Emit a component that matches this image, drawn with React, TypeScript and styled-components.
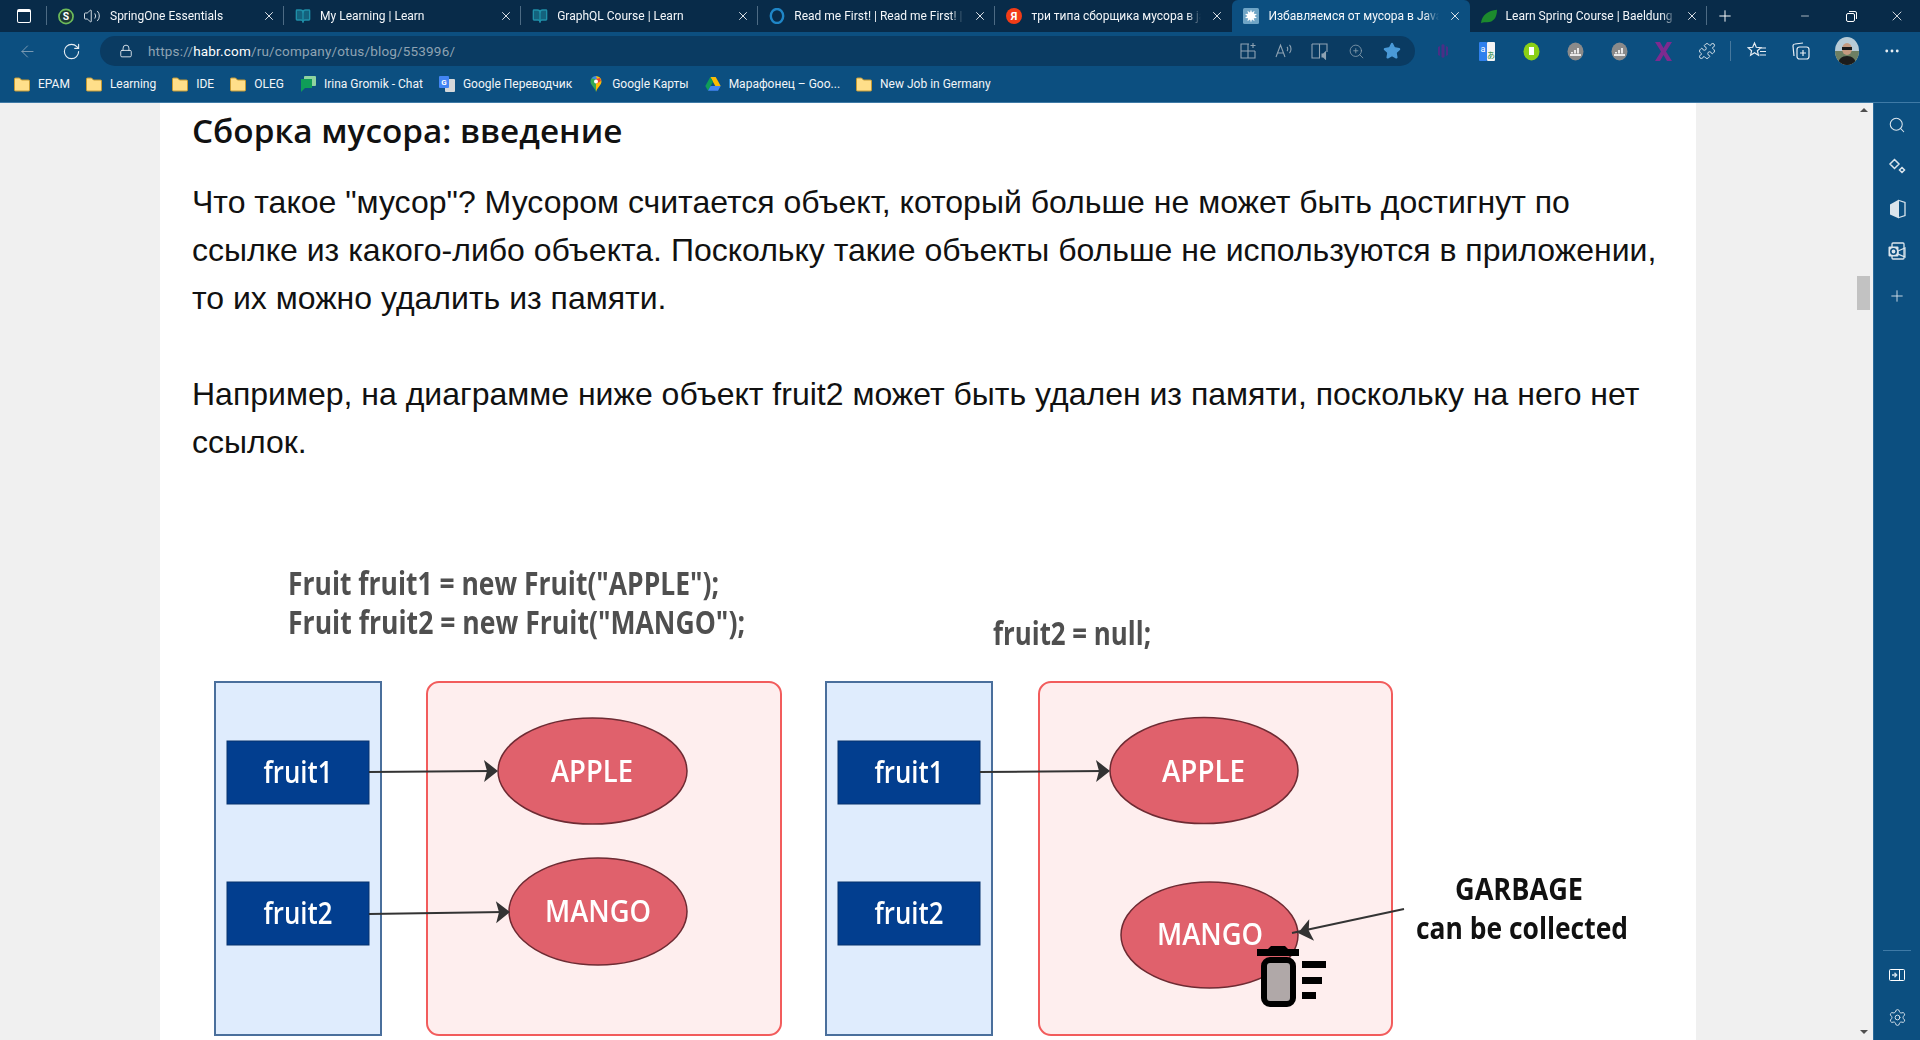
import styled, { createGlobalStyle } from "styled-components";
import { ReactNode } from "react";
import {
  ArrowLeft,
  RotateCw,
  Lock,
  Volume2,
  BookOpen,
  X,
  Plus,
  Minus,
  Search,
  ZoomIn,
  Star,
  Puzzle,
  Settings,
  Ellipsis,
} from "lucide-react";

const GlobalStyle = createGlobalStyle`
  html, body {
    margin: 0;
    padding: 0;
    height: 100%;
    overflow: hidden;
    background: #f0f0f0;
  }
  * {
    box-sizing: border-box;
  }
`;

const Window = styled.div`
  display: flex;
  flex-direction: column;
  width: 1920px;
  height: 1040px;
  overflow: hidden;
  font-family: Roboto, "Noto Sans", sans-serif;
`;

/* ---------- tab strip ---------- */

const TabStrip = styled.div`
  display: flex;
  align-items: stretch;
  height: 32px;
  background: #082b49;
  color: #fff;
`;

const WindowButton = styled.div`
  display: flex;
  align-items: center;
  justify-content: center;
  width: 47px;
  position: relative;
`;

const Separator = styled.span`
  position: absolute;
  right: 0;
  top: 6px;
  bottom: 7px;
  width: 1px;
  background: #4d6b84;
`;

const WindowGlyph = styled.span`
  width: 14px;
  height: 14px;
  border: 1.5px solid #fff;
  border-top-width: 3px;
  border-radius: 2px;
`;

const Tab = styled.div<{ $active?: boolean }>`
  position: relative;
  display: flex;
  align-items: center;
  width: 237.1px;
  padding: 0 8px 0 11px;
  gap: 9px;
  font-size: 12px;
  background: ${(p) => (p.$active ? "#0c4f80" : "transparent")};
  border-radius: ${(p) => (p.$active ? "6px 6px 0 0" : "0")};
`;

const TabFavicon = styled.span`
  display: flex;
  align-items: center;
  justify-content: center;
  width: 16px;
  height: 16px;
  flex: none;
`;

const TabTitle = styled.span`
  flex: 1;
  overflow: hidden;
  white-space: nowrap;
  color: #f4f7fa;
  mask-image: linear-gradient(to right, #000 calc(100% - 14px), transparent);
`;

const TabClose = styled.span`
  display: flex;
  flex: none;
  color: #e9eef2;
`;

const NewTab = styled.div`
  display: flex;
  align-items: center;
  justify-content: center;
  width: 36px;
`;

const WindowControls = styled.div`
  display: flex;
  align-items: center;
  margin-left: auto;
`;

const WindowControl = styled.span`
  display: flex;
  align-items: center;
  justify-content: center;
  width: 46px;
  height: 32px;
`;

/* ---------- toolbar ---------- */

const Toolbar = styled.div`
  display: flex;
  align-items: center;
  height: 38px;
  padding: 4px 6px 4px 5px;
  background: #0c4f80;
  color: #e8eef3;
`;

const ToolSlot = styled.span<{ $size?: number }>`
  display: flex;
  align-items: center;
  justify-content: center;
  flex: none;
  width: ${(p) => p.$size ?? 44}px;
  height: 30px;
`;

const AddressBar = styled.div`
  display: flex;
  align-items: center;
  flex: 1;
  height: 30px;
  margin-left: 7px;
  margin-right: 6px;
  padding: 0 5px 0 9px;
  background: #0a3b62;
  border-radius: 15px;
`;

const Url = styled.div`
  flex: 1;
  margin-left: 5px;
  font-size: 13.5px;
  letter-spacing: 0.18px;
  color: #8fa3b3;
  b {
    font-weight: 400;
    color: #fff;
  }
`;

const ToolDivider = styled.span`
  width: 1px;
  height: 20px;
  margin: 0 3px 0 1px;
  background: #47789d;
`;

/* ---------- bookmarks ---------- */

const BookmarkBar = styled.div`
  display: flex;
  align-items: center;
  gap: 16px;
  height: 32px;
  padding: 0 0 4px 14px;
  background: #0c4f80;
  font-size: 12px;
  color: #f2f5f8;
`;

const Bookmark = styled.div`
  display: flex;
  align-items: center;
  gap: 8px;
  white-space: nowrap;
`;

const BookmarkIcon = styled.span`
  display: flex;
  flex: none;
  width: 16px;
  height: 16px;
`;

/* ---------- page ---------- */

const Main = styled.div`
  flex: 1;
  display: flex;
  min-height: 0;
  border-top: 1px solid #3f7aa6;
`;

const PageArea = styled.div`
  flex: 1;
  display: flex;
  justify-content: center;
  background: #f0f0f0;
  overflow: hidden;
`;

const Article = styled.article`
  width: 1536px;
  background: #fff;
  padding-top: 5px;
  color: #111;
`;

const Heading = styled.h2`
  margin: 0 0 26px;
  padding-left: 32px;
  font-family: "Open Sans", "Noto Sans", sans-serif;
  font-size: 33.3px;
  line-height: 44px;
  font-weight: 600;
  color: #111;
`;

const Paragraph = styled.p`
  margin: 0;
  padding: 0 32px;
  font-family: "Liberation Sans", Arial, sans-serif;
  font-size: 32px;
  line-height: 48px;
  color: #111;
`;

const Diagram = styled.svg`
  display: block;
  margin-top: 54px;
  filter: blur(0.5px);
`;

const CodeText = styled.text`
  font-family: "Open Sans", sans-serif;
  font-weight: 700;
  font-size: 32px;
  fill: #4f4f4f;
`;

const NodeText = styled.text`
  font-family: "Open Sans", sans-serif;
  font-weight: 600;
  font-size: 31px;
  fill: #fff;
`;

const NoteText = styled.text`
  font-family: "Open Sans", sans-serif;
  font-weight: 700;
  font-size: 30px;
  fill: #111;
`;

/* ---------- scrollbar and sidebar ---------- */

const Scrollbar = styled.div`
  position: relative;
  width: 17px;
  background: #f0f0f0;
`;

const ScrollArrow = styled.span<{ $down?: boolean }>`
  position: absolute;
  left: 4px;
  ${(p) => (p.$down ? "bottom: 6px;" : "top: 5px;")}
  border-left: 4px solid transparent;
  border-right: 4px solid transparent;
  ${(p) => (p.$down ? "border-top: 4px solid #505050;" : "border-bottom: 4px solid #505050;")}
`;

const ScrollThumb = styled.span`
  position: absolute;
  left: 1px;
  top: 173px;
  width: 13px;
  height: 34px;
  background: #c2c2c2;
`;

const Sidebar = styled.aside`
  display: flex;
  flex-direction: column;
  align-items: center;
  width: 47px;
  padding: 1px 0 2px;
  background: #0c4f80;
  border-left: 1px solid #2b6a99;
  color: #dbe5ec;
`;

const SideSlot = styled.span<{ $shift?: number }>`
  display: flex;
  align-items: center;
  justify-content: center;
  width: 100%;
  height: 42px;
  flex: none;
  margin-top: ${(p) => p.$shift ?? 0}px;
`;

const SideSpacer = styled.div`
  flex: 1;
`;

const SideDivider = styled.span`
  width: 28px;
  height: 1px;
  margin-bottom: 3px;
  background: #3f7aa6;
`;

/* ---------- icons ---------- */

const SpringIcon = () => (
  <svg width="17" height="17" viewBox="0 0 17 17">
    <circle cx="8.5" cy="8.5" r="7.5" fill="#1c3a33" stroke="#6dbb5a" strokeWidth="1.8" />
    <text x="8.5" y="12.5" textAnchor="middle" fontSize="11" fontWeight="700" fill="#fff" fontFamily="Roboto">
      S
    </text>
  </svg>
);

const RingIcon = () => (
  <svg width="16" height="16" viewBox="0 0 16 16">
    <ellipse cx="8" cy="8" rx="6.2" ry="7" fill="none" stroke="#1f86c7" strokeWidth="2.4" />
  </svg>
);

const YandexIcon = () => (
  <svg width="16" height="16" viewBox="0 0 16 16">
    <circle cx="8" cy="8" r="8" fill="#f23c17" />
    <text x="8" y="12" textAnchor="middle" fontSize="11" fontWeight="700" fill="#fff" fontFamily="Roboto">
      Я
    </text>
  </svg>
);

const HabrIcon = () => (
  <svg width="16" height="16" viewBox="0 0 16 16">
    <rect width="16" height="16" rx="1.5" fill="#6fa5c6" />
    <path
      d="M8 1.5l1 3 2.6-1.7-.8 3 3.2.2-2.300 2 2.300 2-3.200.2.800 3L9 11.500l-1 3-1-3-2.600 1.700.8-3-3.200-.2 2.300-2-2.300-2 3.200-.2-.8-3L7 4.500z"
      fill="#fff"
    />
  </svg>
);

const LeafIcon = () => (
  <svg width="18" height="15" viewBox="0 0 18 15">
    <path d="M0 15C1 6 8 1 18 0c0 9-4 14-11 14-2 0-4 0-7 1z" fill="#1c8a2d" />
  </svg>
);

const FolderIcon = () => (
  <svg width="16" height="16" viewBox="0 0 16 16">
    <path d="M.5 3a1 1 0 011-1h4l2 2h7a1 1 0 011 1v9a1 1 0 01-1 1h-13a1 1 0 01-1-1z" fill="#ffdf8a" stroke="#c69a32" />
  </svg>
);

const ChatIcon = () => (
  <svg width="16" height="16" viewBox="0 0 16 16">
    <rect x="4" y="0" width="12" height="10" rx="1" fill="#8fd3a0" />
    <path d="M1 3h11v9H5l-4 4z" fill="#0f9d58" />
  </svg>
);

const TranslateIcon = () => (
  <svg width="16" height="16" viewBox="0 0 16 16">
    <rect x="6" y="3" width="10" height="13" rx="1" fill="#d5d8da" />
    <rect x="0" y="0" width="10" height="12" rx="1" fill="#4285f4" />
    <text x="5" y="9" textAnchor="middle" fontSize="8" fontWeight="700" fill="#fff" fontFamily="Roboto">
      G
    </text>
  </svg>
);

const MapsIcon = () => (
  <svg width="16" height="16" viewBox="0 0 16 16">
    <path d="M8 0a5.5 5.5 0 015.5 5.5C13.5 9 9.5 11 8 16z" fill="#fbbc04" />
    <path d="M8 0a5.5 5.5 0 00-5.5 5.5C2.5 9 6.5 11 8 16z" fill="#34a853" />
    <path d="M3.5 2.5A5.5 5.5 0 018 0l1 3z" fill="#4285f4" />
    <path d="M12 2L8 3v5l5-3z" fill="#ea4335" />
    <circle cx="8" cy="5.5" r="2" fill="#fff" />
  </svg>
);

const DriveIcon = () => (
  <svg width="16" height="16" viewBox="0 0 16 16">
    <path d="M5.3 1h5.4l5 9h-5.4z" fill="#fbbc04" />
    <path d="M5.3 1L.3 10l2.700 4.700L8 5.800z" fill="#0f9d58" />
    <path d="M3 14.700h10l2.700-4.700H5.600z" fill="#4285f4" />
  </svg>
);

const CircleBadge = ({ color, children }: { color: string; children?: ReactNode }) => (
  <svg width="17" height="19" viewBox="0 0 17 19">
    <ellipse cx="8.5" cy="9.5" rx="8" ry="9" fill={color} />
    {children}
  </svg>
);

const BarsGlyph = () => (
  <path
    d="M3 12h11v2H3zM4 10h2v1.500H4zM7 8h2v3.500H7zM10 6h2v5.500h-2z"
    fill="#e8e8e8"
  />
);

const TranslatorIcon = () => (
  <svg width="16" height="19" viewBox="0 0 16 19">
    <rect width="8" height="19" rx="1" fill="#2f80ed" />
    <rect x="8" width="8" height="19" rx="1" fill="#f4f4f4" />
    <text x="4" y="10" textAnchor="middle" fontSize="9" fill="#fff" fontFamily="Roboto">
      a
    </text>
    <text x="12" y="16" textAnchor="middle" fontSize="8" fill="#2a8a3e" fontFamily="Noto Sans CJK JP">
      あ
    </text>
  </svg>
);

const PurpleMark = () => (
  <svg width="12" height="14" viewBox="0 0 12 14">
    <path d="M1 3l2-1v10l-2-1zM4.500 1l1.500-1 1.500 1v12l-1.500 1-1.500-1zM9 2l2 1v8l-2 1z" fill="#4a2f86" />
  </svg>
);

const CrossMark = () => (
  <svg width="17" height="19" viewBox="0 0 17 19">
    <path d="M0 0h5l3.500 6L12 0h5L11 9.500 17 19h-5l-3.500-6L5 19H0l6-9.500z" fill="#7d2a8f" />
  </svg>
);

const AvatarIcon = () => (
  <svg width="24" height="28" viewBox="0 0 24 28">
    <defs>
      <clipPath id="avatar-clip">
        <ellipse cx="12" cy="14" rx="12" ry="14" />
      </clipPath>
    </defs>
    <g clipPath="url(#avatar-clip)">
      <rect width="24" height="28" fill="#b7cbd6" />
      <rect y="14" width="24" height="14" fill="#6d7f63" />
      <ellipse cx="12" cy="12" rx="5" ry="6" fill="#c59a80" />
      <rect x="7" y="10" width="10" height="3" fill="#1a1a1a" />
      <path d="M3 28c0-6 4-9 9-9s9 3 9 9z" fill="#1c1c1c" />
    </g>
  </svg>
);

const FavoritesIcon = () => (
  <svg width="20" height="20" viewBox="0 0 20 20" fill="none" stroke="#e8eef3" strokeWidth="1.2">
    <path d="M7.5 2l1.800 4.300 4.600.4-3.500 3 1 4.500-3.900-2.400-3.900 2.400 1-4.500-3.500-3 4.600-.4z" />
    <path d="M14 7h5M13 10.500h6M12.500 14h6.500" />
  </svg>
);

const CollectionsIcon = () => (
  <svg width="20" height="20" viewBox="0 0 20 20" fill="none" stroke="#e8eef3" strokeWidth="1.2">
    <path d="M2 15L1 5a2 2 0 012-2l8-1" />
    <rect x="5" y="6" width="12" height="12" rx="2.5" />
    <path d="M11 9v6M8 12h6" />
  </svg>
);

const TabGroupIcon = () => (
  <svg width="16" height="16" viewBox="0 0 16 16" fill="none" stroke="#8fa3b3" strokeWidth="1.1">
    <path d="M9 1H1v14h14V8M1 8h14M8 1v14M13 0v5M10.500 2.500h5" />
  </svg>
);

const ReadAloudIcon = () => (
  <svg width="18" height="16" viewBox="0 0 18 16" fill="none" stroke="#8fa3b3" strokeWidth="1.1">
    <path d="M1 14L5.500 2 10 14M2.800 10h5.400M12 4c1 1 1 3 0 4M14.500 2c2 2 2 6 0 8" />
  </svg>
);

const ReaderIcon = () => (
  <svg width="18" height="18" viewBox="0 0 18 18" fill="none" stroke="#8fa3b3" strokeWidth="1.1">
    <path d="M1 2h15v8M1 2v14h8M8.500 2v14" />
    <path d="M11 12h1.500l2-2v7l-2-2H11z" fill="#8fa3b3" />
  </svg>
);

const SparkIcon = () => (
  <svg width="18" height="18" viewBox="0 0 18 18" fill="none" stroke="#dbe5ec" strokeWidth="1.5">
    <path d="M6.500 1.500L11 6l-4.500 4.500L2 6zM14 9.500l2.500 2.500-2.500 2.500-2.500-2.500z" />
  </svg>
);

const OfficeIcon = () => (
  <svg width="17" height="20" viewBox="0 0 17 20">
    <path d="M1 5.500L10 .5v19l-9-4z" fill="#dbe5ec" />
    <path d="M10 1.500l6 2v13l-6 2" fill="none" stroke="#dbe5ec" strokeWidth="1.3" />
  </svg>
);

const OutlookIcon = () => (
  <svg width="18" height="18" viewBox="0 0 18 18">
    <rect x="4" y="1" width="12" height="16" rx="1" fill="none" stroke="#dbe5ec" strokeWidth="1.3" />
    <path d="M10 9l7-3v9l-7-3z" fill="none" stroke="#dbe5ec" strokeWidth="1.2" />
    <rect x="0.5" y="4.5" width="10" height="10" rx="1" fill="#dbe5ec" />
    <circle cx="5.5" cy="9.5" r="2.7" fill="none" stroke="#0c4f80" strokeWidth="1.6" />
  </svg>
);

const SplitViewIcon = () => (
  <svg width="16" height="12" viewBox="0 0 16 12" fill="none" stroke="#fff" strokeWidth="1">
    <rect x="0.5" y="0.5" width="15" height="11" rx="1" />
    <path d="M10.500 .5v11" />
    <path d="M3 6h4M5.500 3.800L7.700 6 5.500 8.200" strokeWidth="1.3" stroke="#cfe0ea" />
  </svg>
);

/* ---------- data ---------- */

const learnIcon = <BookOpen size={16} color="#1f8fa8" fill="#1f8fa8" fillOpacity={0.55} />;

const tabs: { icon: ReactNode; title: string; active?: boolean; audio?: boolean }[] = [
  { icon: <SpringIcon />, title: "SpringOne Essentials", audio: true },
  { icon: learnIcon, title: "My Learning | Learn" },
  { icon: learnIcon, title: "GraphQL Course | Learn" },
  { icon: <RingIcon />, title: "Read me First! | Read me First! | Avatar" },
  { icon: <YandexIcon />, title: "три типа сборщика мусора в java" },
  { icon: <HabrIcon />, title: "Избавляемся от мусора в Java / Habr", active: true },
  { icon: <LeafIcon />, title: "Learn Spring Course | Baeldung" },
];

const bookmarks: { icon: ReactNode; label: string }[] = [
  { icon: <FolderIcon />, label: "EPAM" },
  { icon: <FolderIcon />, label: "Learning" },
  { icon: <FolderIcon />, label: "IDE" },
  { icon: <FolderIcon />, label: "OLEG" },
  { icon: <ChatIcon />, label: "Irina Gromik - Chat" },
  { icon: <TranslateIcon />, label: "Google Переводчик" },
  { icon: <MapsIcon />, label: "Google Карты" },
  { icon: <DriveIcon />, label: "Марафонец – Goo..." },
  { icon: <FolderIcon />, label: "New Job in Germany" },
];

/* ---------- diagram parts ---------- */

const Arrow = ({ x1, y1, x2, y2 }: { x1: number; y1: number; x2: number; y2: number }) => {
  const angle = (Math.atan2(y2 - y1, x2 - x1) * 180) / Math.PI;
  return (
    <g>
      <line x1={x1} y1={y1} x2={x2 - 6} y2={y2} stroke="#333" strokeWidth="2" />
      <path
        d={`M${x2} ${y2}l-14 -11 3 11 -3 11z`}
        fill="#333"
        transform={`rotate(${angle} ${x2} ${y2})`}
      />
    </g>
  );
};

const Stack = ({ x, y1, y2, width }: { x: number; y1: number; y2: number; width: number }) => (
  <>
    <rect x={x} y="682" width={width} height="353" fill="#dfecfd" stroke="#4a6f9c" strokeWidth="2" />
    {[
      { y: y1, label: "fruit1" },
      { y: y2, label: "fruit2" },
    ].map((box) => (
      <g key={box.label}>
        <rect x={x + 12} y={box.y} width={width - 24} height="63" fill="#023e8f" stroke="#06326f" />
        <NodeText
          x={x + width / 2}
          y={box.y + 42}
          textAnchor="middle"
          textLength={69}
          lengthAdjust="spacingAndGlyphs"
        >
          {box.label}
        </NodeText>
      </g>
    ))}
  </>
);

const Fruit = ({
  cx,
  cy,
  rx,
  ry,
  label,
  textX,
  textY,
  textWidth,
}: {
  cx: number;
  cy: number;
  rx: number;
  ry: number;
  label: string;
  textX: number;
  textY: number;
  textWidth: number;
}) => (
  <>
    <ellipse cx={cx} cy={cy} rx={rx} ry={ry} fill="#e0616c" stroke="#6e2b33" strokeWidth="1.5" />
    <NodeText x={textX} y={textY} textLength={textWidth} lengthAdjust="spacingAndGlyphs">
      {label}
    </NodeText>
  </>
);

const TrashIcon = () => (
  <g>
    <path d="M1268 949l3-3h14l3 3z" fill="#000" />
    <rect x="1257" y="949" width="42" height="7" fill="#000" />
    <rect x="1264" y="960" width="29" height="44" rx="6" fill="#b0a8a8" stroke="#000" strokeWidth="6" />
    <rect x="1302" y="961" width="24" height="7" fill="#000" />
    <rect x="1302" y="977" width="20" height="7" fill="#000" />
    <rect x="1302" y="992" width="14" height="7" fill="#000" />
  </g>
);

function FruitDiagram() {
  return (
    <Diagram width="1536" height="520" viewBox="160 520 1536 520">
      <CodeText x="288" y="595" textLength={431} lengthAdjust="spacingAndGlyphs">
        Fruit fruit1 = new Fruit("APPLE");
      </CodeText>
      <CodeText x="288" y="634" textLength={457} lengthAdjust="spacingAndGlyphs">
        Fruit fruit2 = new Fruit("MANGO");
      </CodeText>
      <CodeText x="993" y="645" textLength={158} lengthAdjust="spacingAndGlyphs">
        fruit2 = null;
      </CodeText>

      <Stack x={215} y1={741} y2={882} width={166} />
      <rect x="427" y="682" width="354" height="353" rx="12" fill="#feeeee" stroke="#f25c5c" strokeWidth="2" />
      <Fruit cx={592.5} cy={771} rx={94.5} ry={53} label="APPLE" textX={551} textY={782} textWidth={82} />
      <Fruit cx={598} cy={911.5} rx={89} ry={53.5} label="MANGO" textX={545} textY={922} textWidth={106} />
      <Arrow x1={369} y1={772} x2={498} y2={771} />
      <Arrow x1={369} y1={914} x2={510} y2={912} />

      <Stack x={826} y1={741} y2={882} width={166} />
      <rect x="1039" y="682" width="353" height="353" rx="12" fill="#feeeee" stroke="#f25c5c" strokeWidth="2" />
      <Fruit cx={1204} cy={770.5} rx={94} ry={53} label="APPLE" textX={1162} textY={782} textWidth={83} />
      <Fruit cx={1209.5} cy={935} rx={88.5} ry={53} label="MANGO" textX={1157} textY={945} textWidth={106} />
      <Arrow x1={980} y1={772} x2={1110} y2={771} />
      <Arrow x1={1404} y1={909} x2={1298} y2={933} />
      <TrashIcon />

      <NoteText x="1455" y="900" textLength={128} lengthAdjust="spacingAndGlyphs">
        GARBAGE
      </NoteText>
      <NoteText x="1416" y="939" textLength={212} lengthAdjust="spacingAndGlyphs">
        can be collected
      </NoteText>
    </Diagram>
  );
}

export default function App() {
  return (
    <Window>
      <GlobalStyle />
      <TabStrip>
        <WindowButton>
          <WindowGlyph />
          <Separator />
        </WindowButton>
        {tabs.map((tab, index) => (
          <Tab key={tab.title} $active={tab.active}>
            <TabFavicon>{tab.icon}</TabFavicon>
            {tab.audio && <Volume2 size={18} color="#e8eef3" strokeWidth={1.2} />}
            <TabTitle>{tab.title}</TabTitle>
            <TabClose>
              <X size={14} strokeWidth={1.6} />
            </TabClose>
            {!tab.active && index !== 4 && <Separator />}
          </Tab>
        ))}
        <NewTab>
          <Plus size={18} strokeWidth={1.3} />
        </NewTab>
        <WindowControls>
          <WindowControl>
            <Minus size={12} strokeWidth={1.3} />
          </WindowControl>
          <WindowControl>
            <svg width="11" height="11" viewBox="0 0 11 11" fill="none" stroke="#fff">
              <rect x="0.5" y="2.5" width="8" height="8" rx="1.5" />
              <path d="M3 .5h6a1.500 1.500 0 011.500 1.500v6" />
            </svg>
          </WindowControl>
          <WindowControl>
            <X size={16} strokeWidth={1.2} />
          </WindowControl>
        </WindowControls>
      </TabStrip>

      <Toolbar>
        <ToolSlot>
          <ArrowLeft size={19} strokeWidth={1.2} color="#7f9db4" />
        </ToolSlot>
        <ToolSlot>
          <RotateCw size={19} strokeWidth={1.4} />
        </ToolSlot>
        <AddressBar>
          <ToolSlot $size={34}>
            <Lock size={14} strokeWidth={1.5} />
          </ToolSlot>
          <Url>
            https://<b>habr.com</b>/ru/company/otus/blog/553996/
          </Url>
          <ToolSlot $size={36}>
            <TabGroupIcon />
          </ToolSlot>
          <ToolSlot $size={36}>
            <ReadAloudIcon />
          </ToolSlot>
          <ToolSlot $size={36}>
            <ReaderIcon />
          </ToolSlot>
          <ToolSlot $size={36}>
            <ZoomIn size={17} strokeWidth={1.1} color="#8fa3b3" />
          </ToolSlot>
          <ToolSlot $size={36}>
            <Star size={18} fill="#4a9ad8" color="#4a9ad8" />
          </ToolSlot>
        </AddressBar>
        <ToolSlot>
          <PurpleMark />
        </ToolSlot>
        <ToolSlot>
          <TranslatorIcon />
        </ToolSlot>
        <ToolSlot>
          <CircleBadge color="#8bd017">
            <rect x="6" y="5" width="5" height="8" fill="#fff" />
          </CircleBadge>
        </ToolSlot>
        <ToolSlot>
          <CircleBadge color="#8a8a8a">
            <BarsGlyph />
          </CircleBadge>
        </ToolSlot>
        <ToolSlot>
          <CircleBadge color="#8a8a8a">
            <BarsGlyph />
          </CircleBadge>
        </ToolSlot>
        <ToolSlot>
          <CrossMark />
        </ToolSlot>
        <ToolSlot>
          <Puzzle size={18} strokeWidth={1.2} />
        </ToolSlot>
        <ToolDivider />
        <ToolSlot $size={45}>
          <FavoritesIcon />
        </ToolSlot>
        <ToolSlot $size={45}>
          <CollectionsIcon />
        </ToolSlot>
        <ToolSlot $size={45}>
          <AvatarIcon />
        </ToolSlot>
        <ToolSlot $size={45}>
          <Ellipsis size={18} strokeWidth={1.8} />
        </ToolSlot>
      </Toolbar>

      <BookmarkBar>
        {bookmarks.map((item) => (
          <Bookmark key={item.label}>
            <BookmarkIcon>{item.icon}</BookmarkIcon>
            {item.label}
          </Bookmark>
        ))}
      </BookmarkBar>

      <Main>
        <PageArea>
          <Article>
            <Heading>Сборка мусора: введение</Heading>
            <Paragraph>
              Что такое "мусор"? Мусором считается объект, который больше не может быть достигнут по
              ссылке из какого-либо объекта. Поскольку такие объекты больше не используются в приложении,
              то их можно удалить из памяти.
              <br />
              <br />
              Например, на диаграмме ниже объект fruit2 может быть удален из памяти, поскольку на него нет
              ссылок.
            </Paragraph>
            <FruitDiagram />
          </Article>
        </PageArea>
        <Scrollbar>
          <ScrollArrow />
          <ScrollThumb />
          <ScrollArrow $down />
        </Scrollbar>
        <Sidebar>
          <SideSlot>
            <Search size={18} strokeWidth={1.4} />
          </SideSlot>
          <SideSlot>
            <SparkIcon />
          </SideSlot>
          <SideSlot>
            <OfficeIcon />
          </SideSlot>
          <SideSlot>
            <OutlookIcon />
          </SideSlot>
          <SideSlot $shift={3}>
            <Plus size={18} strokeWidth={1.2} />
          </SideSlot>
          <SideSpacer />
          <SideDivider />
          <SideSlot>
            <SplitViewIcon />
          </SideSlot>
          <SideSlot>
            <Settings size={19} strokeWidth={1.2} />
          </SideSlot>
        </Sidebar>
      </Main>
    </Window>
  );
}
